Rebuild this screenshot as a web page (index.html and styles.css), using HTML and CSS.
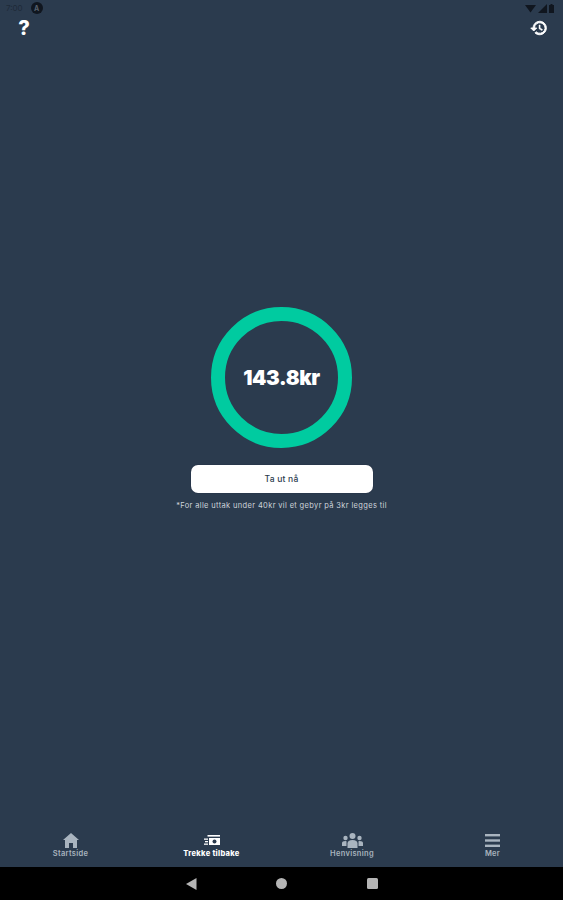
FILE: index.html
```html
<!DOCTYPE html>
<html lang="no">
<head>
<meta charset="utf-8">
<title>Trekk tilbake</title>
<link rel="stylesheet" href="styles.css">
</head>
<body>
<div class="app">
  <div class="status">
    <div class="status-left"><span class="time">7:00</span><span class="a-badge">A</span></div>
    <div class="status-right">
      <svg width="11" height="9" viewBox="0 0 11 9"><path d="M0 1 L11 1 L5.5 8.5Z" fill="#10161f"/></svg>
      <svg width="9" height="9" viewBox="0 0 9 9"><path d="M0 9 L9 0 V9Z" fill="#10161f"/></svg>
      <svg width="5" height="9" viewBox="0 0 5 9"><rect x="0" y="1" width="5" height="8" fill="#10161f"/><rect x="1.5" y="0" width="2" height="1" fill="#10161f"/></svg>
    </div>
  </div>
  <div class="topbar">
    <span class="help">?</span>
    <svg class="history" width="18" height="18" viewBox="0 0 24 24"><path d="M13 3a9 9 0 0 0-9 9H1l4 4 4-4H6a7 7 0 1 1 2.1 5l-1.5 1.5A9 9 0 1 0 13 3z" fill="#fff" stroke="#fff" stroke-width="1.2"/><path d="M12 8v5l4 2.4.8-1.3-3.3-2V8z" fill="#fff" stroke="#fff" stroke-width="0.6"/></svg>
  </div>
  <main class="main">
    <div class="ring"><span class="amount">143.8kr</span></div>
    <button class="cta">Ta ut nå</button>
    <p class="note">*For alle uttak under 40kr vil et gebyr på 3kr legges til</p>
  </main>
  <nav class="tabs">
    <div class="tab">
      <svg width="16" height="15" viewBox="0 0 16 15"><path d="M8 0 L16 7 H14 V15 H10 V10 H6 V15 H2 V7 H0Z" fill="#a9b4bf"/></svg>
      <span>Startside</span>
    </div>
    <div class="tab active">
      <svg width="16" height="15" viewBox="0 0 16 15"><rect x="3.5" y="2" width="12.5" height="1.6" fill="#fff"/><rect x="5" y="5" width="11" height="7" fill="#fff"/><rect x="0" y="5.5" width="4" height="1.3" fill="#fff"/><rect x="1" y="8" width="3" height="1.3" fill="#fff"/><rect x="0" y="10.5" width="4" height="1.3" fill="#fff"/><circle cx="10.5" cy="8.5" r="2" fill="#2b3b4e"/></svg>
      <span>Trekke tilbake</span>
    </div>
    <div class="tab">
      <svg width="21" height="15" viewBox="0 0 21 15"><circle cx="10.5" cy="3" r="3" fill="#a9b4bf"/><circle cx="3.5" cy="5" r="2.2" fill="#a9b4bf"/><circle cx="17.5" cy="5" r="2.2" fill="#a9b4bf"/><path d="M5.5 15 V10.5 Q5.5 7 10.5 7 T15.5 10.5 V15Z" fill="#a9b4bf"/><path d="M0 13 V10 Q0 8 3.5 8 L4.5 8.2 V13Z M21 13 V10 Q21 8 17.500 8 L16.500 8.2 V13Z" fill="#a9b4bf"/></svg>
      <span>Henvisning</span>
    </div>
    <div class="tab">
      <svg width="15" height="15" viewBox="0 0 15 15"><rect y="1" width="15" height="2.400" fill="#a9b4bf"/><rect y="6.300" width="15" height="2.400" fill="#a9b4bf"/><rect y="11.600" width="15" height="2.400" fill="#a9b4bf"/></svg>
      <span>Mer</span>
    </div>
  </nav>
  <div class="sysnav">
    <svg width="11" height="12" viewBox="0 0 11 12"><path d="M10.500 0 V12 L0 6Z" fill="#b5b5b5"/></svg>
    <span class="dot"></span>
    <span class="square"></span>
  </div>
</div>
</body>
</html>
```
FILE: styles.css
```css
* { box-sizing: border-box; }
html, body { margin: 0; padding: 0; }
body { background: #2b3b4e; font-family: "Inter", "Liberation Sans", sans-serif; }
.app { width: 563px; height: 900px; display: flex; flex-direction: column; background: #2b3b4e; overflow: hidden; }
.status { height: 16px; flex: none; display: flex; justify-content: space-between; align-items: center; padding: 0 9px 0 6px; }
.status-left { display: flex; align-items: center; gap: 8px; }
.time { font-size: 8px; color: #1e2a38; }
.a-badge { width: 12px; height: 12px; border-radius: 50%; background: #10161f; color: #56606c; font-size: 7px; font-weight: 700; display: flex; align-items: center; justify-content: center; }
.status-right { display: flex; align-items: center; gap: 2px; }
.topbar { height: 24px; flex: none; display: flex; justify-content: space-between; align-items: center; padding: 0 15px 0 18px; }
.help { font-size: 20px; font-weight: 800; color: #fff; line-height: 24px; width: 12px; text-align: center; }
.history { display: block; }
.main { flex: 1; display: flex; flex-direction: column; align-items: center; padding-top: 267px; min-height: 0; }
.ring { width: 141px; height: 141px; border-radius: 50%; border: 14px solid #00cba0; display: flex; align-items: center; justify-content: center; }
.amount { font-size: 20.500px; font-weight: 900; color: #fff; letter-spacing: -0.35px; }
.cta { width: 182px; height: 28px; margin-top: 17px; padding: 0; border: none; border-radius: 7px; background: #fff; color: #2b3b4e; font: 500 8.500px "Inter", "Liberation Sans", sans-serif; letter-spacing: 0.2px; box-shadow: 0 0 1px #141c33; }
.note { margin: 8px 0 0; font-size: 7.500px; line-height: 9px; color: #cdd4da; white-space: nowrap; letter-spacing: 0.35px; }
.tabs { height: 41px; flex: none; display: grid; grid-template-columns: 141px 141px 140px 141px; padding-top: 7px; }
.tab { display: flex; flex-direction: column; align-items: center; gap: 1px; color: #a9b4bf; font-size: 7.500px; font-weight: 600; line-height: 9px; letter-spacing: 0.3px; }
.tab svg { display: block; }
.tab.active { color: #fff; font-weight: 800; }
.sysnav { height: 33px; flex: none; background: #000; display: flex; align-items: center; justify-content: center; gap: 79.500px; }
.dot { width: 11px; height: 11px; border-radius: 50%; background: #b5b5b5; }
.square { width: 11px; height: 11px; border-radius: 1.500px; background: #b5b5b5; }
```
